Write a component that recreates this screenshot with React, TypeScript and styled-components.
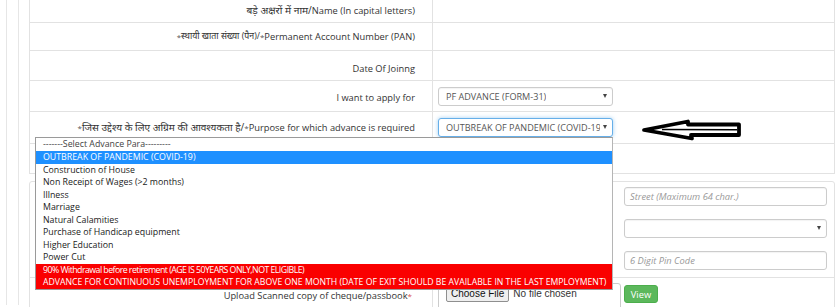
import React from 'react';
import styled, { createGlobalStyle } from 'styled-components';

const GlobalStyle = createGlobalStyle`
  html, body {
    margin: 0;
    padding: 0;
    background: #ffffff;
  }
  body {
    font-family: 'Open Sans', 'Noto Sans Devanagari', 'Noto Sans', sans-serif;
    color: #333333;
    overflow: hidden;
  }
`;

const Page = styled.div`
  position: relative;
  width: 838px;
  height: 307px;
  overflow: hidden;
  padding-left: 6px;
  box-sizing: border-box;
`;

const OuterFrame = styled.div`
  height: 100%;
  border-left: 1px solid #e6e6e6;
  padding-left: 11px;
`;

const InnerFrame = styled.div`
  height: 100%;
  border-left: 1px solid #e6e6e6;
  padding: 0 3px 0 10px;
`;

const UpperTable = styled.div`
  margin-top: -2px;
  border-left: 1px solid #e2e2e2;
  border-right: 1px solid #e2e2e2;
`;

const Row = styled.div<{ $h: number }>`
  display: grid;
  grid-template-columns: 403px 1fr;
  height: ${p => p.$h}px;
  box-sizing: border-box;
  border-bottom: 1px solid #e2e2e2;
`;

const LabelCell = styled.div<{ $shift?: number }>`
  display: flex;
  align-items: center;
  justify-content: flex-end;
  padding: ${p => p.$shift || 0}px 17px 0 0;
  border-right: 1px solid #e2e2e2;
  font-size: 9.3px;
  white-space: nowrap;
`;

// hindi part of a label, sized per row so the line starts where it should
const Hindi = styled.span<{ $size: number }>`
  font-size: ${p => p.$size}px;
`;

const ValueCell = styled.div`
  display: flex;
  align-items: center;
  padding-left: 5px;
`;

const Star = styled.span<{ $red?: boolean }>`
  color: ${p => (p.$red ? '#d9534f' : '#555')};
  font-size: 8px;
`;

const SelectBox = styled.div<{ $focus?: boolean; $w?: number }>`
  position: relative;
  width: ${p => p.$w || 175}px;
  height: 19px;
  box-sizing: border-box;
  border: 1px solid ${p => (p.$focus ? '#66afe9' : '#cccccc')};
  border-radius: 3px;
  box-shadow: ${p => (p.$focus ? '0 0 4px rgba(102,175,233,.6)' : 'inset 0 1px 1px rgba(0,0,0,.05)')};
  display: flex;
  align-items: center;
  padding: 0 12px 0 7px;
  font-size: 9.1px;
  color: #555;
  background: #fff;
  white-space: nowrap;
  overflow: hidden;
`;

const SelectText = styled.span`
  overflow: hidden;
`;

const Caret = styled.span`
  position: absolute;
  right: 5px;
  top: 6px;
  width: 0;
  height: 0;
  border-left: 2.5px solid transparent;
  border-right: 2.5px solid transparent;
  border-top: 4px solid #444;
`;

const LowerPanel = styled.div`
  margin-top: 7px;
  border: 1px solid #e2e2e2;
  border-radius: 3px;
`;

const AddressBlock = styled.div`
  display: flex;
  height: 96px;
  box-sizing: border-box;
  border-bottom: 1px solid #e2e2e2;
`;

const Spacer = styled.div`
  width: 583px;
`;

const InputColumn = styled.div`
  flex: 1;
  display: flex;
  flex-direction: column;
  gap: 13px;
  padding: 5px 7px 0 11px;
`;

const TextInput = styled.div`
  height: 19px;
  box-sizing: border-box;
  border: 1px solid #cccccc;
  border-radius: 3px;
  box-shadow: inset 0 1px 1px rgba(0, 0, 0, 0.05);
  display: flex;
  align-items: center;
  padding-left: 5px;
  font-size: 9.3px;
  font-style: italic;
  color: #999;
`;

const UploadRow = styled.div`
  display: grid;
  grid-template-columns: 403px 1fr;
  height: 40px;
`;

const UploadLabel = styled.div`
  border-right: 1px solid #e2e2e2;
  text-align: right;
  padding: 11px 20px 0 0;
  font-size: 9.3px;
  white-space: nowrap;
`;

const UploadValue = styled.div`
  display: flex;
  align-items: flex-start;
  gap: 3px;
  padding: 5px 0 0 5px;
`;

const FileBox = styled.div`
  width: 183px;
  height: 28px;
  box-sizing: border-box;
  border: 1px solid #cccccc;
  border-radius: 3px;
  display: flex;
  align-items: flex-start;
  padding: 1px 7px;
  gap: 4px;
  font-family: 'Liberation Sans', Arial, sans-serif;
  font-size: 10px;
  color: #333;
`;

const FileButton = styled.div`
  height: 17px;
  box-sizing: border-box;
  padding: 0 4px;
  border: 1px solid #8f8f8f;
  border-radius: 2px;
  background: #efefef;
  display: flex;
  align-items: center;
  color: #111;
`;

const FileText = styled.span`
  line-height: 17px;
`;

const ViewButton = styled.div`
  margin-top: 2px;
  width: 34px;
  height: 18px;
  box-sizing: border-box;
  background: #5cb85c;
  border: 1px solid #4cae4c;
  border-radius: 3px;
  color: #fff;
  font-size: 9.3px;
  display: flex;
  align-items: center;
  justify-content: center;
`;

const DropList = styled.div`
  position: absolute;
  left: 35px;
  top: 137px;
  width: 578px;
  box-sizing: border-box;
  border: 1px solid #9a9a9a;
  border-right-color: #b5b5b5;
  background: #fff;
`;

type Kind = 'head' | 'selected' | 'danger' | undefined;

const Option = styled.div<{ $kind?: Kind; $size: number; $ls?: number }>`
  height: ${p => (p.$kind === 'head' ? 13 : 12.5)}px;
  line-height: ${p => (p.$kind === 'head' ? 13 : 12.5)}px;
  padding-left: 7px;
  font-size: ${p => p.$size}px;
  letter-spacing: ${p => p.$ls || 0}px;
  white-space: nowrap;
  overflow: hidden;
  color: ${p => (p.$kind === 'selected' || p.$kind === 'danger' ? '#fff' : p.$kind === 'head' ? '#444' : '#1a1a1a')};
  background: ${p => (p.$kind === 'selected' ? '#1e90ff' : p.$kind === 'danger' ? '#fa0000' : 'transparent')};
`;

const ArrowMark = styled.svg`
  position: absolute;
  left: 640px;
  top: 117px;
`;

const options: { text: string; kind?: Kind; size: number; ls?: number }[] = [
  { text: '-------Select Advance Para---------', kind: 'head', size: 8.8 },
  { text: 'OUTBREAK OF PANDEMIC (COVID-19)', kind: 'selected', size: 8.8 },
  { text: 'Construction of House', size: 8.8 },
  { text: 'Non Receipt of Wages (>2 months)', size: 8.8 },
  { text: 'Illness', size: 8.8 },
  { text: 'Marriage', size: 8.8 },
  { text: 'Natural Calamities', size: 8.8 },
  { text: 'Purchase of Handicap equipment', size: 8.8 },
  { text: 'Higher Education', size: 8.8 },
  { text: 'Power Cut', size: 8.8 },
  {
    text: '90% Withdrawal before retirement (AGE IS 50YEARS ONLY,NOT ELIGIBLE)',
    kind: 'danger',
    size: 8.8,
    ls: -0.55,
  },
  {
    text: 'ADVANCE FOR CONTINUOUS UNEMPLOYMENT FOR ABOVE ONE MONTH (DATE OF EXIT SHOULD BE AVAILABLE IN THE LAST EMPLOYMENT)',
    kind: 'danger',
    size: 8.7,
  },
];

export default function App() {
  return (
    <Page>
      <GlobalStyle />
      <OuterFrame>
        <InnerFrame>
          <UpperTable>
            <Row $h={25}>
              <LabelCell>
                <Hindi $size={10.2}>बड़े अक्षरों में नाम/</Hindi>Name (In capital letters)
              </LabelCell>
              <ValueCell />
            </Row>
            <Row $h={28}>
              <LabelCell>
                <Star>*</Star>
                <Hindi $size={8.8}>स्थायी खाता संख्या (पैन)/</Hindi>
                <Star>*</Star>Permanent Account Number (PAN)
              </LabelCell>
              <ValueCell />
            </Row>
            <Row $h={30}>
              <LabelCell $shift={6}>Date Of Joinng</LabelCell>
              <ValueCell />
            </Row>
            <Row $h={31}>
              <LabelCell $shift={3}>I want to apply for</LabelCell>
              <ValueCell>
                <SelectBox>
                  <SelectText>PF ADVANCE (FORM-31)</SelectText>
                  <Caret />
                </SelectBox>
              </ValueCell>
            </Row>
            <Row $h={32}>
              <LabelCell>
                <Star>*</Star>
                <Hindi $size={10.1}>जिस उद्देश्य के लिए अग्रिम की आवश्यकता है/</Hindi>
                <Star>*</Star>Purpose for which advance is required
              </LabelCell>
              <ValueCell>
                <SelectBox $focus>
                  <SelectText>OUTBREAK OF PANDEMIC (COVID-19)</SelectText>
                  <Caret />
                </SelectBox>
              </ValueCell>
            </Row>
            <Row $h={30}>
              <LabelCell />
              <ValueCell />
            </Row>
          </UpperTable>

          <LowerPanel>
            <AddressBlock>
              <Spacer />
              <InputColumn>
                <TextInput>Street (Maximum 64 char.)</TextInput>
                <SelectBox $w={203}>
                  <Caret />
                </SelectBox>
                <TextInput>6 Digit Pin Code</TextInput>
              </InputColumn>
            </AddressBlock>
            <UploadRow>
              <UploadLabel>
                Upload Scanned copy of cheque/passbook<Star $red>*</Star>
              </UploadLabel>
              <UploadValue>
                <FileBox>
                  <FileButton>Choose File</FileButton>
                  <FileText>No file chosen</FileText>
                </FileBox>
                <ViewButton>View</ViewButton>
              </UploadValue>
            </UploadRow>
          </LowerPanel>
        </InnerFrame>
      </OuterFrame>

      <DropList>
        {options.map(o => (
          <Option key={o.text} $kind={o.kind} $size={o.size} $ls={o.ls}>
            {o.text}
          </Option>
        ))}
      </DropList>

      <ArrowMark width="106" height="26" viewBox="0 0 106 26">
        <path
          d="M4 13 L48 4.5 L48 7.5 L99 7.5 L99 18 L51 18 L52 21.5 Z"
          fill="#fff"
          stroke="#000"
          strokeWidth="3.8"
          strokeLinejoin="round"
        />
        <path d="M22 12.5 L97 12.8" stroke="#000" strokeWidth="1.4" />
      </ArrowMark>
    </Page>
  );
}
